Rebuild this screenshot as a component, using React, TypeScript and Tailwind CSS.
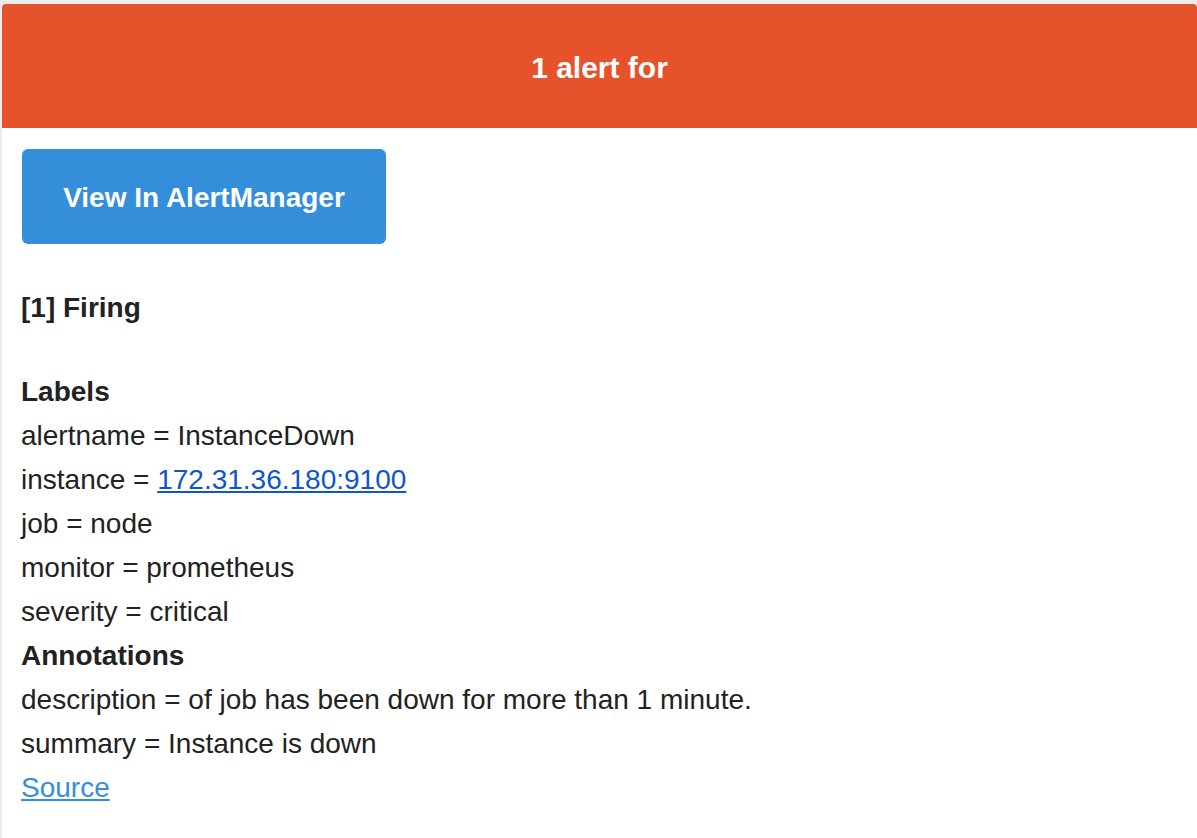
import React from "react";

const font = { fontFamily: '"Liberation Sans", Arial, Helvetica, sans-serif' };

export default function App() {
  return (
    <div className="min-h-[838px] w-[1197px] bg-[#ececec] pt-[4px] pl-[2px]" style={font}>
      <div className="w-[1195px] min-h-[834px] bg-white rounded-t-[4px] overflow-hidden">
        <div className="h-[124px] bg-[#E6522C] flex items-center justify-center text-white text-[30px] font-bold pt-[3px]">
          1 alert for
        </div>
        <div className="pl-[19px] pt-[21px]">
          <div className="ml-[1px] w-[364px] h-[95px] rounded-[6px] bg-[#348EDA] flex items-center justify-center text-white text-[28px] font-bold pt-[2px]">
            View In AlertManager
          </div>
          <div className="mt-[42px] text-[28px] leading-[44px] text-[#222222]">
            <div className="font-bold">[1] Firing</div>
            <div className="h-[40px]" />
            <div className="font-bold">Labels</div>
            <div>alertname = InstanceDown</div>
            <div>
              instance = <span className="text-[#1155cc] underline">172.31.36.180:9100</span>
            </div>
            <div>job = node</div>
            <div>monitor = prometheus</div>
            <div>severity = critical</div>
            <div className="font-bold">Annotations</div>
            <div>description = of job has been down for more than 1 minute.</div>
            <div>summary = Instance is down</div>
            <div>
              <span className="text-[#348EDA] underline">Source</span>
            </div>
          </div>
        </div>
      </div>
    </div>
  );
}
